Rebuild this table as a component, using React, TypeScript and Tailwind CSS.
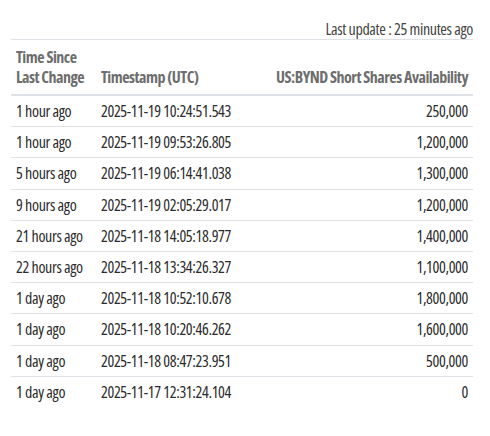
const rows: [string, string, string][] = [
  ["1 hour ago", "2025-11-19 10:24:51.543", "250,000"],
  ["1 hour ago", "2025-11-19 09:53:26.805", "1,200,000"],
  ["5 hours ago", "2025-11-19 06:14:41.038", "1,300,000"],
  ["9 hours ago", "2025-11-19 02:05:29.017", "1,200,000"],
  ["21 hours ago", "2025-11-18 14:05:18.977", "1,400,000"],
  ["22 hours ago", "2025-11-18 13:34:26.327", "1,100,000"],
  ["1 day ago", "2025-11-18 10:52:10.678", "1,800,000"],
  ["1 day ago", "2025-11-18 10:20:46.262", "1,600,000"],
  ["1 day ago", "2025-11-18 08:47:23.951", "500,000"],
  ["1 day ago", "2025-11-17 12:31:24.104", "0"],
];

export default function App() {
  return (
    <div className="w-[490px] h-[436px] bg-white font-['Open_Sans',sans-serif] font-stretch-condensed text-[16px] tracking-[-0.35px] text-[#2b2b2b] font-normal">
      <div className="ml-[11px] w-[462px] pt-[19px]">
        <div className="text-right text-[#444] leading-[20px] h-[20px]">Last update : 25 minutes ago</div>
        <table className="w-full border-collapse">
          <thead>
            <tr className="text-[#6d6d6d] font-bold tracking-[-0.5px] align-bottom">
              <th className="w-[85px] text-left px-[5px] pt-[7px] pb-[7px] leading-[20px] border-t border-b-2 border-[#dee2e6]">
                Time Since
                <br />
                Last Change
              </th>
              <th className="text-left px-[5px] pt-[7px] pb-[7px] leading-[20px] border-t border-b-2 border-[#dee2e6]">
                Timestamp (UTC)
              </th>
              <th className="text-right px-[5px] pt-[7px] pb-[7px] leading-[20px] border-t border-b-2 border-[#dee2e6]">
                US:BYND Short Shares Availability
              </th>
            </tr>
          </thead>
          <tbody>
            {rows.map((r, i) => (
              <tr key={i} className={i < rows.length - 1 ? "border-b border-[#dee2e6]" : ""}>
                <td className="px-[5px] py-[5px] leading-[20.2px] text-left">{r[0]}</td>
                <td className="px-[5px] py-[5px] leading-[20.2px] text-left">{r[1]}</td>
                <td className="px-[5px] py-[5px] leading-[20.2px] text-right">{r[2]}</td>
              </tr>
            ))}
          </tbody>
        </table>
      </div>
    </div>
  );
}
